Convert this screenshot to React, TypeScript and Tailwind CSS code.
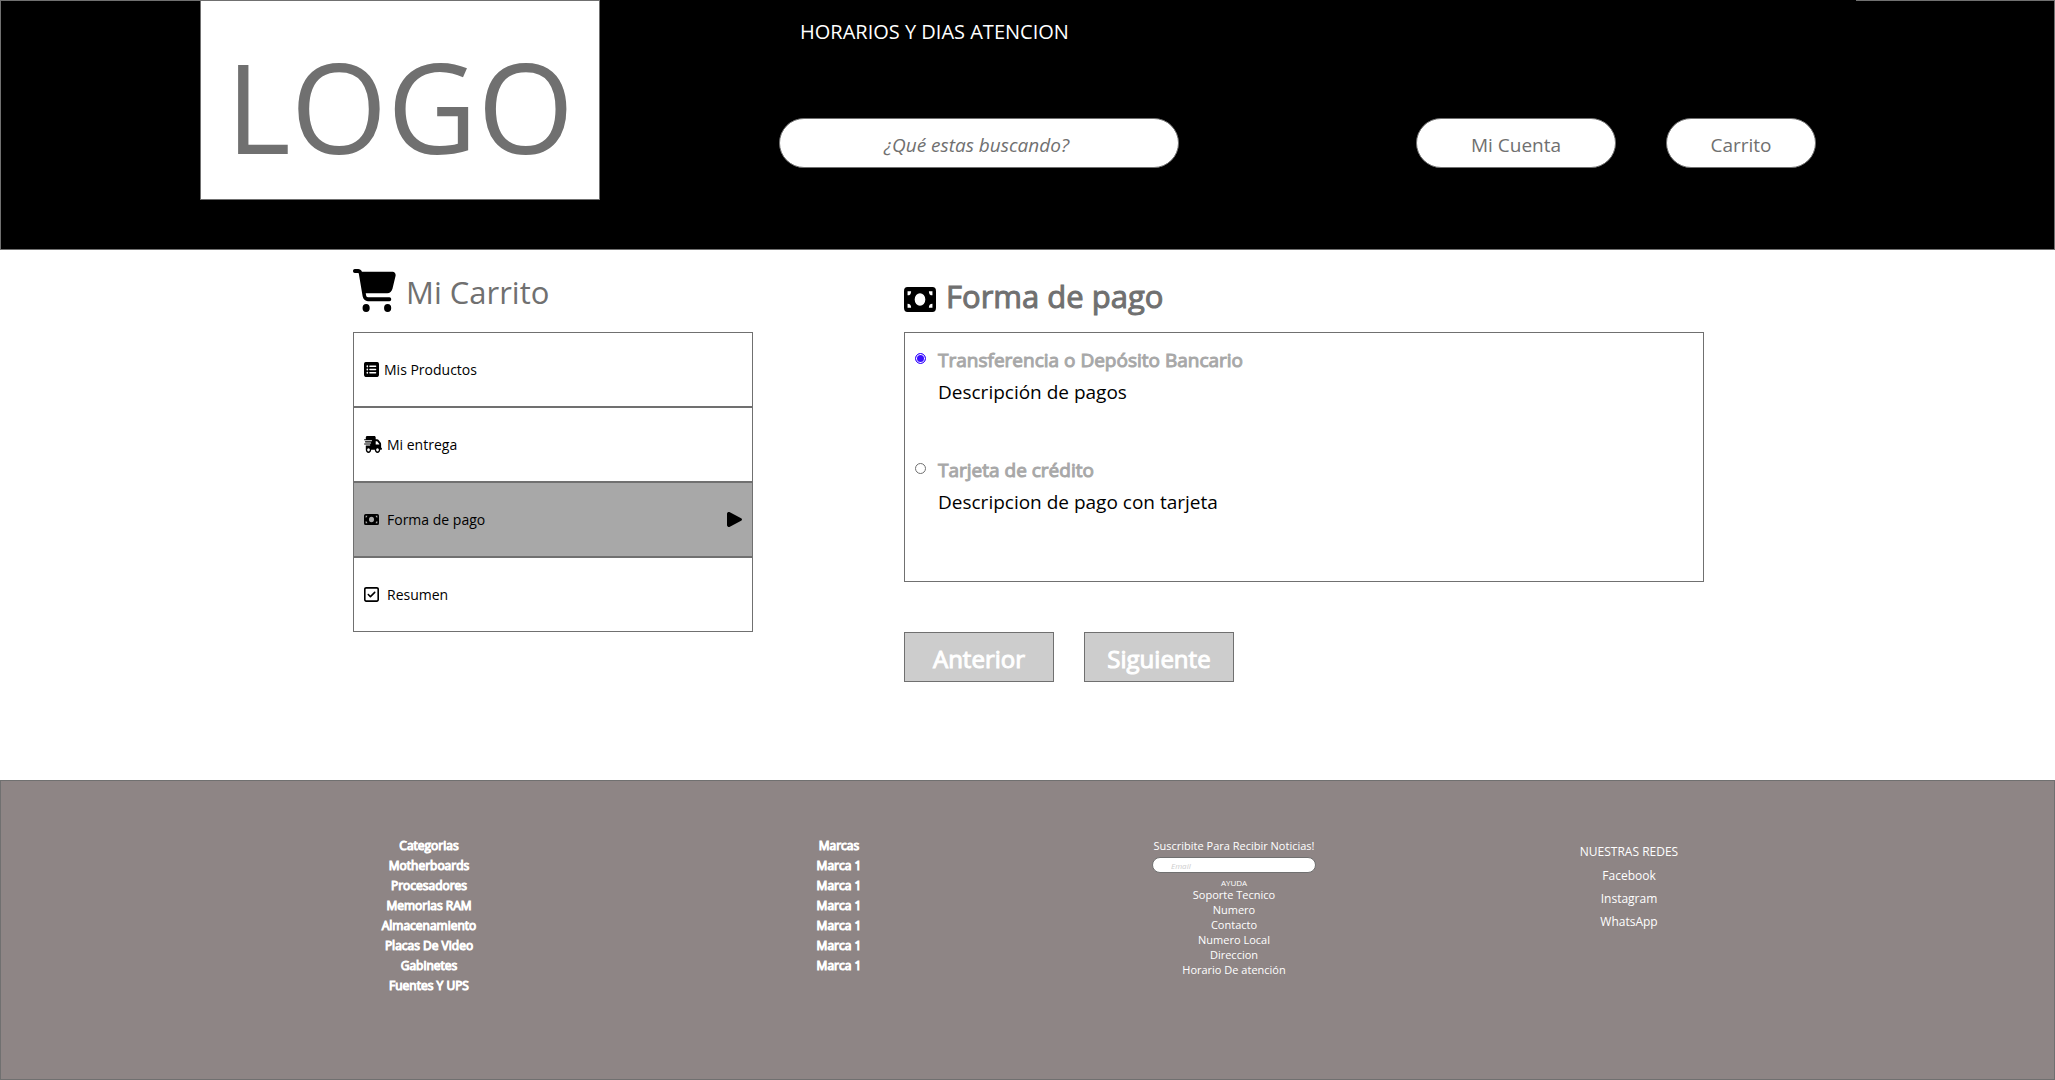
import { useState } from "react";
import type { ReactNode } from "react";
import { FaCartShopping, FaPlay, FaRectangleList, FaRegSquareCheck, FaTruckFast } from "react-icons/fa6";

const categorias = [
  "Categorias",
  "Motherboards",
  "Procesadores",
  "Memorias RAM",
  "Almacenamiento",
  "Placas De Video",
  "Gabinetes",
  "Fuentes Y UPS",
];
const marcas = ["Marcas", "Marca 1", "Marca 1", "Marca 1", "Marca 1", "Marca 1", "Marca 1"];
const ayuda = ["Soporte Tecnico", "Numero", "Contacto", "Numero Local", "Direccion", "Horario De atención"];
const redes = ["Facebook", "Instagram", "WhatsApp"];

function Billete({ className }: { className: string }) {
  return (
    <svg viewBox="0 0 576 384" preserveAspectRatio="none" fill="currentColor" aria-hidden="true" className={className}>
      <path
        fillRule="evenodd"
        d="M64 0H512A64 64 0 0 1 576 64V320A64 64 0 0 1 512 384H64A64 64 0 0 1 0 320V64A64 64 0 0 1 64 0ZM64 64V128A64 64 0 0 0 128 64ZM512 64H448A64 64 0 0 0 512 128ZM64 320H128A64 64 0 0 0 64 256ZM512 320V256A64 64 0 0 0 448 320ZM288 96A96 96 0 0 0 288 288A96 96 0 0 0 288 96Z"
      />
    </svg>
  );
}

function Header() {
  return (
    <header className="flex h-[250px] items-start border border-[#707070] bg-black pl-[199px]">
      <a
        href="#inicio"
        className="-mt-px flex h-[200px] w-[400px] shrink-0 items-center justify-center border border-[#707070] bg-white pt-3 text-[124px] leading-none text-[#707070]"
      >
        LOGO
      </a>
      <div className="-mt-px flex h-[168px] max-w-[1256px] grow flex-col justify-between bg-black pr-10 pl-[179px]">
        <p className="mt-4 pl-[21px] text-[20px] leading-8 text-white">HORARIOS Y DIAS ATENCION</p>
        <div className="flex h-[50px] items-stretch">
          <input
            type="search"
            aria-label="Buscar"
            placeholder="¿Qué estas buscando?"
            className="w-[400px] rounded-full border border-[#707070] bg-white pt-1 pl-3 text-center text-[19px] text-[#707070] italic placeholder:text-[#707070]"
          />
          <nav className="ml-auto flex gap-[50px] text-[19px] text-[#707070]">
            <button type="button" className="w-[200px] rounded-full border border-[#707070] bg-white pt-1">
              Mi Cuenta
            </button>
            <button type="button" className="w-[150px] rounded-full border border-[#707070] bg-white pt-1">
              Carrito
            </button>
          </nav>
        </div>
      </div>
    </header>
  );
}

function Paso({ icon, label, active = false }: { icon: ReactNode; label: string; active?: boolean }) {
  return (
    <li>
      <a
        href="#paso"
        aria-current={active ? "step" : undefined}
        className={`flex h-[75px] items-center border border-[#707070] px-2.5 text-[14px] text-black ${active ? "bg-[#a8a8a8]" : "bg-white"}`}
      >
        {icon}
        {label}
        {active && <FaPlay preserveAspectRatio="none" className="ml-auto h-[17px] w-[15px]" />}
      </a>
    </li>
  );
}

function Pasos() {
  return (
    <section className="w-[400px] shrink-0">
      <h2 className="flex h-[63px] items-center gap-2.5 pb-5 text-[31px] leading-10 text-[#707070]">
        <FaCartShopping preserveAspectRatio="none" className="size-[43px] text-black" />
        <span className="pt-0.5">Mi Carrito</span>
      </h2>
      <ol>
        <Paso
          icon={<FaRectangleList preserveAspectRatio="none" className="mr-[5px] h-[17px] w-[15px]" />}
          label="Mis Productos"
        />
        <Paso
          icon={<FaTruckFast preserveAspectRatio="none" className="mr-[5px] h-[17px] w-[18px]" />}
          label="Mi entrega"
        />
        <Paso active icon={<Billete className="mr-2 h-[11px] w-[15px]" />} label="Forma de pago" />
        <Paso
          icon={<FaRegSquareCheck preserveAspectRatio="none" className="mr-2 h-[17px] w-[15px]" />}
          label="Resumen"
        />
      </ol>
    </section>
  );
}

interface OpcionProps {
  id: string;
  title: string;
  text: string;
  checked: boolean;
  onSelect: (id: string) => void;
}

function Opcion({ id, title, text, checked, onSelect }: OpcionProps) {
  return (
    <div className="flex items-start gap-3">
      <input
        type="radio"
        id={id}
        name="pago"
        checked={checked}
        onChange={() => onSelect(id)}
        className="mt-[9px] size-[11px] appearance-none rounded-full border border-[#707070] bg-white checked:border-[#3a10ff] checked:bg-[#3a10ff] checked:shadow-[inset_0_0_0_1px_#ffffff]"
      />
      <label htmlFor={id} className="text-[19px] leading-8">
        <span className="block text-[#a8a8a8] [-webkit-text-stroke:1px_#a8a8a8]">{title}</span>
        <span className="block text-black">{text}</span>
      </label>
    </div>
  );
}

function FormaDePago() {
  const [pago, setPago] = useState("transferencia");
  return (
    <section className="max-w-[800px] grow">
      <h1 id="titulo-pago" className="flex h-[63px] items-center gap-2.5 pb-[3px] text-[31px] leading-10 text-[#707070]">
        <Billete className="h-[25px] w-8 text-black" />
        <span className="pb-1.5 [-webkit-text-stroke:1px_#707070]">Forma de pago</span>
      </h1>
      <form>
        <div
          role="radiogroup"
          aria-labelledby="titulo-pago"
          className="flex h-[250px] flex-col gap-[46px] border border-[#707070] px-2.5 pt-[11px]"
        >
          <Opcion
            id="transferencia"
            title="Transferencia o Depósito Bancario"
            text="Descripción de pagos"
            checked={pago === "transferencia"}
            onSelect={setPago}
          />
          <Opcion
            id="tarjeta"
            title="Tarjeta de crédito"
            text="Descripcion de pago con tarjeta"
            checked={pago === "tarjeta"}
            onSelect={setPago}
          />
        </div>
        <div className="mt-[50px] flex gap-[30px] text-[24px] text-white [-webkit-text-stroke:1px_#ffffff]">
          <button type="button" className="h-[50px] w-[150px] border border-[#707070] bg-[#cdcdcd] pt-1">
            Anterior
          </button>
          <button type="button" className="h-[50px] w-[150px] border border-[#707070] bg-[#cdcdcd] pt-1">
            Siguiente
          </button>
        </div>
      </form>
    </section>
  );
}

function Enlaces({ items }: { items: string[] }) {
  return (
    <ul className="leading-5 [-webkit-text-stroke:1px_#ffffff]">
      {items.map((item, i) => (
        <li key={i}>
          <a href="#catalogo">{item}</a>
        </li>
      ))}
    </ul>
  );
}

function Footer() {
  return (
    <footer className="grid h-[300px] grid-cols-[400fr_420fr_370fr_420fr] border border-[#707070] bg-[#8e8585] pt-[55px] pr-[215px] pl-[228px] text-center text-[12px] text-white">
      <Enlaces items={categorias} />
      <Enlaces items={marcas} />
      <div className="flex flex-col items-center text-[11px]">
        <label htmlFor="email" className="leading-5">
          Suscribite Para Recibir Noticias!
        </label>
        <input
          id="email"
          type="email"
          placeholder="Email"
          className="mt-px h-4 w-[164px] rounded-full border border-[#707070] bg-white px-[18px] text-[8px] text-black italic placeholder:text-[#cdcdcd]"
        />
        <h3 className="mt-0.5 text-[8px] leading-4">AYUDA</h3>
        <ul className="-mt-1 leading-[15px]">
          {ayuda.map((item) => (
            <li key={item}>
              <a href="#ayuda">{item}</a>
            </li>
          ))}
        </ul>
      </div>
      <div className="pt-1.5">
        <h3 className="leading-5">NUESTRAS REDES</h3>
        <ul className="mt-0.5 leading-[23px]">
          {redes.map((red) => (
            <li key={red}>
              <a href="#redes">{red}</a>
            </li>
          ))}
        </ul>
      </div>
    </footer>
  );
}

export default function App() {
  return (
    <div className="bg-white font-['Open_Sans',sans-serif]">
      <Header />
      <main className="flex min-h-[530px] gap-[151px] pt-[19px] pr-[300px] pl-[353px]">
        <Pasos />
        <FormaDePago />
      </main>
      <Footer />
    </div>
  );
}
